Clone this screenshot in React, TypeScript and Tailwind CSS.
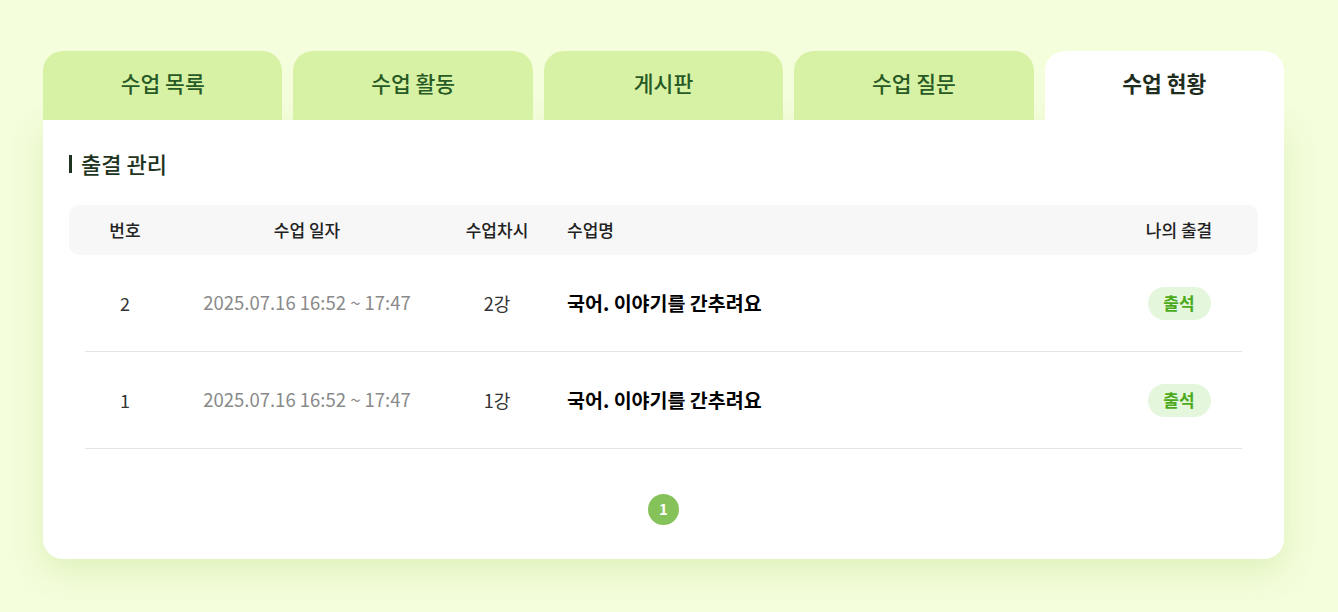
export default function App() {
  const tabs = ["수업 목록", "수업 활동", "게시판", "수업 질문", "수업 현황"]
  const rows = [
    { no: 2, date: "2025.07.16 16:52 ~ 17:47", session: "2강", title: "국어. 이야기를 간추려요", status: "출석" },
    { no: 1, date: "2025.07.16 16:52 ~ 17:47", session: "1강", title: "국어. 이야기를 간추려요", status: "출석" },
  ]
  const font = { fontFamily: '"Noto Sans CJK KR", "Noto Sans", sans-serif' }

  return (
    <div className="min-h-[612px] w-full bg-[#f4fddc] pt-[51px]" style={font}>
      <div className="ml-[43px] w-[1241px]">
        {/* tabs */}
        <div className="flex gap-[11px]">
          {tabs.map((t, i) => {
            const active = i === tabs.length - 1
            return (
              <div
                key={t}
                className={
                  active
                    ? "flex h-[69px] flex-1 justify-center rounded-t-[20px] bg-white pt-[16px] text-[21.5px] font-bold text-[#1f2d1f]"
                    : "flex h-[69px] flex-1 justify-center rounded-t-[20px] bg-[#d7f1a5] pt-[16px] text-[21.5px] font-medium text-[#275a24]"
                }
              >
                {t}
              </div>
            )
          })}
        </div>

        {/* panel */}
        <div className="rounded-b-[20px] bg-white px-[26px] pb-[34px] pt-[27px] shadow-[0_12px_30px_rgba(160,210,90,0.25)]">
          <div className="flex items-center gap-[9px] text-[22px] font-medium text-[#1e3320]">
            <span className="h-[18px] w-[3px] bg-[#1e3320]" />
            출결 관리
          </div>

          <div className="mt-[25px]">
            <div className="grid h-[50px] grid-cols-[112px_252px_128px_1fr_158px] items-center rounded-[10px] bg-[#f7f7f7] text-[17px] font-medium text-[#222]">
              <div className="text-center">번호</div>
              <div className="text-center">수업 일자</div>
              <div className="text-center">수업차시</div>
              <div className="pl-[6px]">수업명</div>
              <div className="text-center">나의 출결</div>
            </div>

            {rows.map((r) => (
              <div key={r.no} className="mx-[16px] border-b border-[#e5e5e5]">
                <div className="-mx-[16px] grid h-[96px] grid-cols-[112px_252px_128px_1fr_158px] items-center text-[18px]">
                  <div className="text-center text-[#333]">{r.no}</div>
                  <div className="text-center text-[18.5px] text-[#8a8a8a]">{r.date}</div>
                  <div className="text-center text-[#333]">{r.session}</div>
                  <div className="pl-[6px] text-[19.5px] font-bold text-black">{r.title}</div>
                  <div className="flex justify-center">
                    <span className="flex h-[33px] w-[63px] items-center justify-center rounded-full bg-[#e4f7dc] text-[17px] font-bold text-[#4caa1c]">
                      {r.status}
                    </span>
                  </div>
                </div>
              </div>
            ))}
          </div>

          <div className="mt-[45px] flex justify-center">
            <span className="flex h-[31px] w-[31px] items-center justify-center rounded-full bg-[#86c25a] text-[15px] font-bold text-white">
              1
            </span>
          </div>
        </div>
      </div>
    </div>
  )
}
